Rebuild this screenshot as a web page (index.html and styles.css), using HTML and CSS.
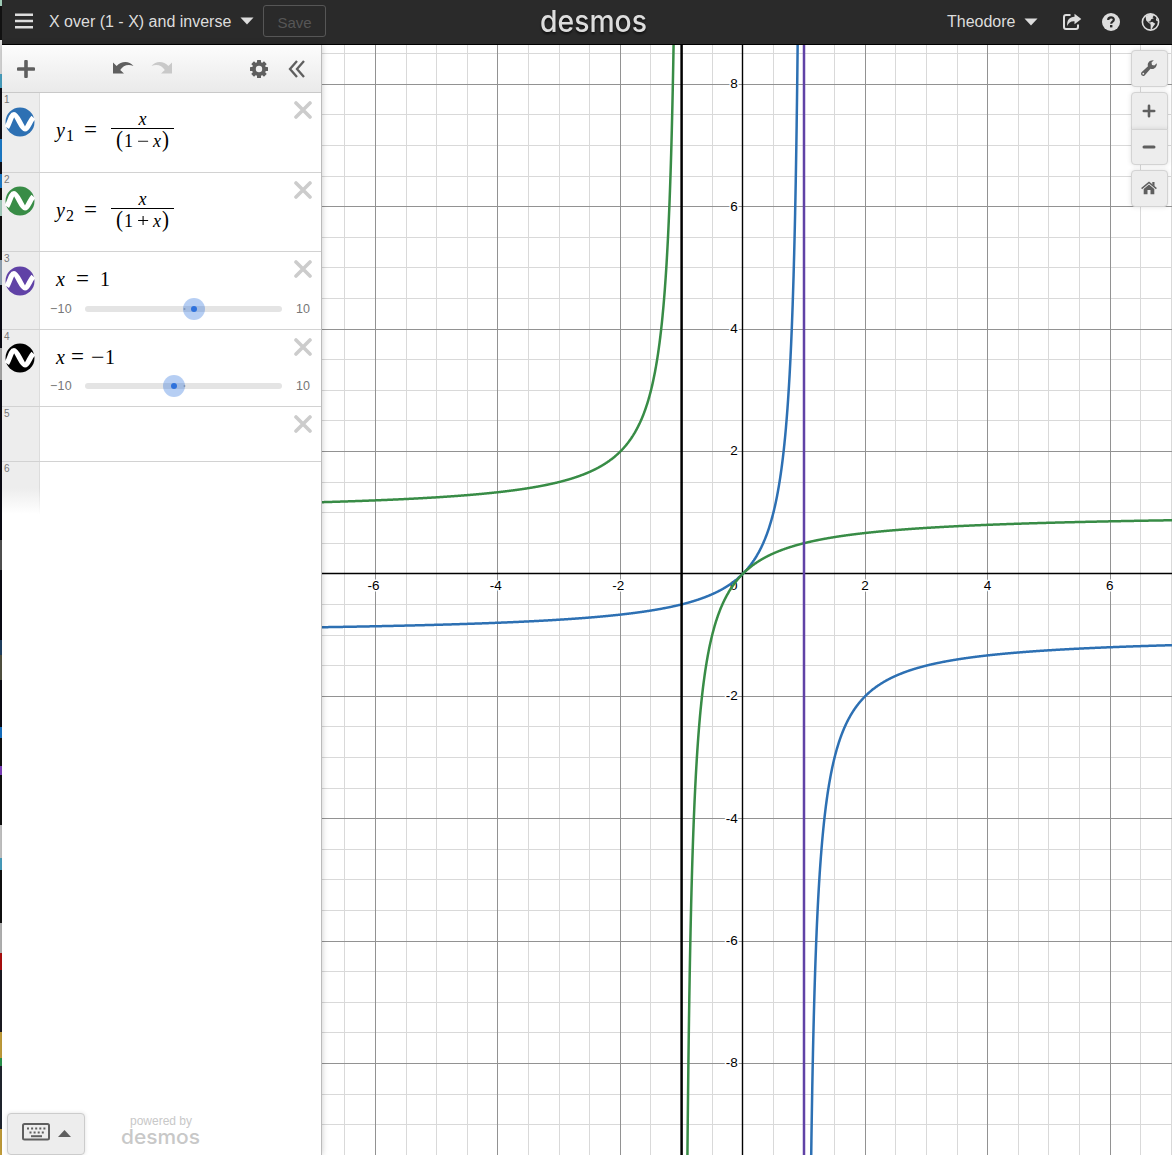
FILE: index.html
```
<!DOCTYPE html>
<html lang="en">
<head>
<meta charset="utf-8">
<title>Desmos | X over (1 - X) and inverse</title>
<link rel="stylesheet" href="styles.css">
</head>
<body>
<svg class="defs" aria-hidden="true">
  <symbol id="close" viewBox="0 0 18 18"><path d="M2 2L16 16M16 2L2 16" stroke="#ccc" stroke-width="3.6" stroke-linecap="round"/></symbol>
  <symbol id="wave" viewBox="0 0 30 30"><circle cx="15" cy="15" r="14.5" fill="currentColor"/><path d="M1.800 20.500C5 15.500 6 7.600 9 7.600C12.500 7.600 16.500 22 20 22C23 22 24.500 14.500 28.300 10.500" fill="none" stroke="#fff" stroke-width="5.200"/></symbol>
  <symbol id="undo" viewBox="0 0 22 14"><path d="M1 1.500V12.500H12L8.200 9C11 4.500 16 2.500 21.500 5C17 -.6 9 .2 4.600 5Z" fill="currentColor"/></symbol>
  <symbol id="caret" viewBox="0 0 14 8"><path d="M.5 .5H13.500L7 7.500Z" fill="currentColor"/></symbol>
</svg>
<div class="app">
  <div class="edge"></div>
  <header class="header">
    <div class="header-left">
      <svg class="burger" width="18" height="16"><path d="M0 1.800H18M0 8H18M0 14.200H18" stroke="#ddd" stroke-width="2.600"/></svg>
      <span class="title">X over (1 - X) and inverse</span>
      <svg class="caret" width="14" height="8"><use href="#caret"/></svg>
      <button class="save">Save</button>
    </div>
    <svg class="logo" width="116" height="40"><text x="3" y="31.500" textLength="107" lengthAdjust="spacingAndGlyphs">desmos</text></svg>
    <div class="header-right">
      <span class="user">Theodore</span>
      <svg class="caret" width="14" height="8"><use href="#caret"/></svg>
      <svg class="share" width="20" height="18" viewBox="0 0 20 18"><path d="M8.500 2H4Q2 2 2 4V14Q2 16 4 16H14Q16 16 16 14V11.500" fill="none" stroke="#ddd" stroke-width="2"/><path d="M12.500 .8L19.300 6L12.500 11.200V8.200C8.800 8 6.500 9.500 5.200 13C4.600 7.200 7.500 3.900 12.500 3.700Z" fill="#ddd"/></svg>
      <svg class="help" width="18" height="18" viewBox="0 0 18 18"><circle cx="9" cy="9" r="9" fill="#ddd"/><path d="M6.200 6.900C6.200 3.400 11.900 3.500 11.800 6.700C11.800 8.700 9.200 8.600 9.200 10.700" fill="none" stroke="#2a2a2a" stroke-width="2.200"/><rect x="8" y="12" width="2.400" height="2.400" fill="#2a2a2a"/></svg>
      <svg class="globe" width="19" height="18" viewBox="0 0 19 18"><circle cx="9.500" cy="9" r="8.100" fill="none" stroke="#ddd" stroke-width="1.600"/><path d="M4.500 3L9.800 .8L13 2.600L11.500 4.200L12.800 5.200L10.200 6.200L9.200 8.400L7.300 8.200L9.400 10.200L8.400 10.500L5.200 7.600ZM9 9.600L11.200 8.800L14.300 10.800L12 13.700L10.600 16.500L9.600 15.700L9.700 12.600ZM15 4.500L17.400 8.300L15 7.600Z" fill="#ddd"/></svg>
    </div>
  </header>

  <aside class="sidebar">
    <div class="toolbar">
      <svg class="add" width="18" height="18"><path d="M9 1.500V16.500M1.500 9H16.500" stroke="#5f5f5f" stroke-width="3.600" stroke-linecap="round"/></svg>
      <svg class="undo" width="22" height="14"><use href="#undo"/></svg>
      <svg class="redo" width="22" height="14"><use href="#undo"/></svg>
      <svg class="gear" width="20" height="20" viewBox="-10 -10 20 20"><g fill="#5f5f5f"><rect x="-2" y="-9" width="4" height="18" rx=".5"/><rect x="-2" y="-9" width="4" height="18" rx=".5" transform="rotate(45)"/><rect x="-2" y="-9" width="4" height="18" rx=".5" transform="rotate(90)"/><rect x="-2" y="-9" width="4" height="18" rx=".5" transform="rotate(135)"/><circle r="7"/></g><circle r="3.200" fill="#f2f2f2"/></svg>
      <svg class="collapse" width="18" height="20"><path d="M9 2L2 10L9 18M16 2L9 10L16 18" fill="none" stroke="#5f5f5f" stroke-width="2.300"/></svg>
    </div>

    <div class="row row1">
      <div class="gutter"><span>1</span><svg class="blue" width="30" height="30"><use href="#wave"/></svg></div>
      <div class="body">
        <div class="math eq"><i class="y">y</i><sub>1</sub><span class="rel">=</span><span class="frac"><i>x</i><span class="den"><b>(</b>1<span class="op">−</span><i>x</i><b>)</b></span></span></div>
      </div>
      <svg class="close" width="18" height="18"><use href="#close"/></svg>
    </div>
    <div class="row row2">
      <div class="gutter"><span>2</span><svg class="green" width="30" height="30"><use href="#wave"/></svg></div>
      <div class="body">
        <div class="math eq"><i class="y">y</i><sub>2</sub><span class="rel">=</span><span class="frac"><i>x</i><span class="den"><b>(</b>1<span class="op">+</span><i>x</i><b>)</b></span></span></div>
      </div>
      <svg class="close" width="18" height="18"><use href="#close"/></svg>
    </div>
    <div class="row row3">
      <div class="gutter"><span>3</span><svg class="purple" width="30" height="30"><use href="#wave"/></svg></div>
      <div class="body">
        <div class="math line wide"><i>x</i><span class="rel">=</span><span>1</span></div>
        <div class="slider"><span class="min">−10</span><svg width="198" height="24"><rect x="0" y="9" width="197" height="6" rx="3" fill="#e4e4e4"/><circle cx="99.500" cy="12" r="1" fill="#aaa"/><circle cx="109" cy="12" r="11" fill="#2f72dc" fill-opacity=".35"/><circle cx="109" cy="12" r="3" fill="#2f72dc"/></svg><span class="max">10</span></div>
      </div>
      <svg class="close" width="18" height="18"><use href="#close"/></svg>
    </div>
    <div class="row row4">
      <div class="gutter"><span>4</span><svg class="black" width="30" height="30"><use href="#wave"/></svg></div>
      <div class="body">
        <div class="math line"><i>x</i><span class="rel">=</span><span class="neg">−</span><span>1</span></div>
        <div class="slider"><span class="min">−10</span><svg width="198" height="24"><rect x="0" y="9" width="197" height="6" rx="3" fill="#e4e4e4"/><circle cx="99.500" cy="12" r="1" fill="#aaa"/><circle cx="89" cy="12" r="11" fill="#2f72dc" fill-opacity=".35"/><circle cx="89" cy="12" r="3" fill="#2f72dc"/></svg><span class="max">10</span></div>
      </div>
      <svg class="close" width="18" height="18"><use href="#close"/></svg>
    </div>
    <div class="row row5">
      <div class="gutter"><span>5</span></div>
      <div class="body"></div>
      <svg class="close" width="18" height="18"><use href="#close"/></svg>
    </div>
    <div class="row row6">
      <div class="gutter"><span>6</span></div>
    </div>

    <div class="footer">
      <button class="keypad">
        <svg width="28" height="18"><rect x="1" y="1" width="26" height="15.500" rx="1.500" fill="none" stroke="#5f5f5f" stroke-width="2"/><path d="M5 5.500H24M7.500 9.500H22" stroke="#5f5f5f" stroke-width="2" stroke-dasharray="2 2.100"/><path d="M9 13.200H20" stroke="#5f5f5f" stroke-width="2"/></svg>
        <svg class="up" width="13" height="7"><path d="M0 7L6.500 0L13 7Z" fill="#5f5f5f"/></svg>
      </button>
      <div class="powered">
        <span>powered by</span>
        <svg width="82" height="27"><text x="1" y="16" textLength="79" lengthAdjust="spacingAndGlyphs">desmos</text></svg>
      </div>
    </div>
  </aside>

  <main class="graph">
    <svg id="plot" width="850" height="1110" viewBox="322 45 850 1110"></svg>
    <div class="controls">
      <button><svg width="18" height="18" viewBox="0 0 18 18"><path d="M1.500 13.200L8 7.300C7 4 9.500 .8 13.800 1.200L11.500 3.500L12 5.900L14.300 6.400L16.800 4.200C17.200 8.200 13.800 10.800 10.500 9.800L4.600 16.400C2.500 18 .1 15.400 1.500 13.200Z" fill="#5f5f5f"/><circle cx="3.300" cy="14.700" r=".9" fill="#ededed"/></svg></button>
      <div class="zoom">
        <button><svg width="14" height="14"><path d="M7 1.800V12.200M1.800 7H12.200" stroke="#5f5f5f" stroke-width="2.600" stroke-linecap="round"/></svg></button>
        <button><svg width="14" height="14"><path d="M2 7H12" stroke="#5f5f5f" stroke-width="3" stroke-linecap="round"/></svg></button>
      </div>
      <button><svg width="16" height="14" viewBox="0 0 16 14"><path d="M.6 7.600L8 1.400L15.400 7.600" fill="none" stroke="#5f5f5f" stroke-width="1.500"/><path d="M11.300 1H13.500V5.500L11.300 3.500ZM2.700 8L8 3.600L13.300 8V13.200H9.500V9H6.500V13.200H2.700Z" fill="#5f5f5f"/></svg></button>
    </div>
  </main>
</div>
<script src="plot.js"></script>
</body>
</html>
```
FILE: styles.css
```
* { box-sizing: border-box; }
body { margin: 0; font-family: "Liberation Sans", Arial, sans-serif; background: #fff; }
button { font: inherit; padding: 0; margin: 0; }
svg { display: block; flex: none; }
.defs { display: none; }

.app {
  display: grid;
  grid-template: 45px 1110px / 2px 320px 850px;
  width: 1172px;
  height: 1155px;
  overflow: hidden;
}
.edge {
  grid-row: 1 / 3;
  background: linear-gradient(#9dcab5 0 6px, #111 6px 40px, #ddd 40px 74px, #4aa5c6 74px 88px, #101018 88px 139px, #1d7fd0 139px 162px, #101018 162px 174px, #1d7fd0 174px 188px, #111 188px 200px, #a9d4c4 200px 216px, #111 216px 260px, #9ab 260px 285px, #0b0b14 285px 348px, #aaa 348px 380px, #0b0b14 380px 540px, #555 540px 570px, #0b0b14 570px 640px, #246 640px 655px, #554 655px 680px, #0b0b14 680px 727px, #1675ca 727px 738px, #111 738px 766px, #8240c4 766px 775px, #111 775px 825px, #ccc 825px 858px, #4aa5c6 858px 870px, #111 870px 923px, #bbb 923px 953px, #b30f0f 953px 970px, #1c1c24 970px 1032px, #cba43c 1032px 1058px, #2c9a50 1058px 1066px, #222731 1066px 1129px, #cba43c 1129px);
}

.header {
  grid-column: 2 / 4;
  display: grid;
  grid-template-columns: 530px 116px 1fr;
  background: #2a2a2a;
  border-bottom: 1px solid #000;
  color: #ddd;
  font-size: 16px;
}
.header-left { display: flex; align-items: center; height: 42px; padding-left: 13px; }
.title { width: 183px; margin: 1px 0 0 16px; white-space: nowrap; }
.header-left .caret { margin-left: 8px; }
.save {
  width: 63px; height: 32px; margin-left: 9px; padding-top: 2px;
  border: 1px solid #565656; border-radius: 3px;
  background: transparent; color: #565656; font-size: 15px;
}
.logo { margin-left: 5px; }
.logo text { font: 500 30px Inter, sans-serif; fill: #ddd; filter: drop-shadow(0 2px 1px #111); }
.header-right { display: flex; align-items: center; justify-content: flex-end; height: 43px; padding-right: 12px; }
.user { width: 70px; margin-top: 1px; white-space: nowrap; }
.header-right .caret { margin-left: 7px; }
.share { margin-left: 24px; }
.help { margin-left: 20px; }
.globe { margin-left: 21px; }

.sidebar {
  display: flex;
  flex-direction: column;
  border-right: 1px solid #bbb;
  box-shadow: 0 0 6px rgba(0, 0, 0, .22);
  background: #fff;
  z-index: 1;
}
.toolbar {
  display: flex; align-items: center;
  height: 48px; padding-left: 15px;
  background: linear-gradient(#fcfcfc, #eaeaea);
  border-bottom: 1px solid #c9c9c9;
}
.undo { margin: -2px 0 0 77px; color: #5f5f5f; }
.redo { margin: -2px 0 0 17px; color: #c9c9c9; transform: scaleX(-1); }
.gear { margin-left: 76px; }
.collapse { margin-left: 19px; }

.row { display: flex; border-bottom: 1px solid #d2d2d2; }
.row1 { height: 80px; }
.row2 { height: 79px; }
.row3 { height: 78px; }
.row4 { height: 77px; }
.row5 { height: 55px; }
.row6 { height: 52px; border: 0; }
.gutter {
  width: 38px; padding: 1px 0 0 2px;
  background: #ededed; border-right: 1px solid #ddd;
  color: #777; font-size: 10px; line-height: 11px;
}
.gutter span { display: block; }
.gutter svg { margin: 1.5px 0 0 1px; }
.row2 .gutter svg, .row4 .gutter svg { margin-top: .5px; }
.row6 .gutter { background: linear-gradient(#ededed 50%, #fff); border-image: linear-gradient(#ddd 50%, #fff) 1; }
.blue { color: #2d70b3; }
.green { color: #388c46; }
.purple { color: #6042a6; }
.black { color: #000; }
.body { width: 246px; flex: none; }
.close { margin: 8px 0 0 8px; }

.math { display: flex; padding-left: 16px; font-family: "Liberation Serif", "Times New Roman", serif; font-size: 20px; line-height: 24px; color: #000; }
.math .rel { width: 13px; font-size: 23px; text-align: center; }
.eq { padding-top: 16px; }
.y { width: 10px; margin-top: 9px; }
.eq sub { width: 8px; margin-top: 15px; font-size: 16px; line-height: 24px; text-align: center; vertical-align: baseline; }
.eq .rel { margin: 9px 14px 0 10px; }
.frac { display: flex; flex-direction: column; align-items: center; width: 63px; font-size: 18px; line-height: 19px; }
.frac > i { height: 19px; padding-top: 1px; }
.den { display: flex; justify-content: center; width: 63px; border-top: 1.5px solid #000; padding-top: 3px; }
.den b { font-weight: 400; font-size: 21px; transform: translateY(-1px) scaleY(1.05); }
.den b:first-child { margin-right: 1px; }
.den b:last-child { margin-left: 1px; }
.den .op { margin: 0 5px; transform: scaleX(1.2); }
.line { height: 45px; padding-top: 15px; }
.line .rel { margin-left: 6px; margin-right: 7px; }
.wide .rel { margin: 0 11px 0 11px; }
.line .neg { width: 14px; font-size: 24px; }
.row4 .line { height: 44px; }
.slider { display: flex; align-items: center; height: 24px; color: #777; font-size: 12.5px; }
.min { flex: none; width: 45px; padding-left: 10px; letter-spacing: .2px; }
.max { margin-left: 13px; flex: none; }

.footer { display: flex; align-items: flex-start; margin-top: auto; height: 42px; padding-left: 5px; }
.keypad {
  display: flex; align-items: center;
  width: 78px; height: 42px; padding: 0 0 4px 14px;
  background: #ededed; border: 1px solid #ccc; border-radius: 4px;
  box-shadow: 0 0 4px rgba(0, 0, 0, .12);
}
.up { margin: 3px 0 0 8px; }
.powered { width: 82px; margin-left: 35px; padding-top: 1px; color: #c8c8c8; font-size: 12px; line-height: 14px; text-align: center; }
.powered span { display: block; }
.powered text { font: 500 20px Inter, sans-serif; fill: #c8c8c8; }

.graph { display: grid; }
.graph > * { grid-area: 1 / 1; }
.controls { display: flex; flex-direction: column; gap: 5px; width: 37px; justify-self: end; margin: 5px 4px 0 0; z-index: 1; }
.controls button {
  display: flex; align-items: center; justify-content: center;
  width: 37px; height: 37px; padding-right: 1px;
  background: #ededed; border: 1px solid #d3d3d3; border-radius: 4px;
  box-shadow: 0 0 5px rgba(0, 0, 0, .12);
}
.zoom button:first-child { height: 38px; border-radius: 4px 4px 0 0; }
.zoom button:last-child { margin-top: -1px; height: 36px; border-radius: 0 0 4px 4px; }
.controls > button:last-child { padding-bottom: 1px; }
.controls > button:first-child { padding-bottom: 2px; }
.minor { stroke: #d9d9d9; }
.major { stroke: #929292; }
.axis { stroke: #000; stroke-width: 1.4; }
.label { font-size: 13.5px; fill: #000; stroke: #fff; stroke-width: 3px; stroke-linejoin: round; paint-order: stroke; }
.curve { fill: none; stroke-width: 2.5; stroke-linejoin: round; }
```
FILE: plot.js
```
const plot = document.getElementById("plot");
const ox = 742.4, oy = 573.4, unit = 61.2;

function add(name, attrs, text) {
  const el = document.createElementNS("http://www.w3.org/2000/svg", name);
  for (const key in attrs) el.setAttribute(key, attrs[key]);
  if (text !== undefined) el.textContent = text;
  plot.appendChild(el);
}
const vertical = (k, cls) => { const x = Math.floor(ox + k * unit + 0.4) + 0.5; add("path", { d: `M${x} 45V1155`, class: cls }); };
const horizontal = (k, cls) => { const y = Math.round(oy - k * unit) + 0.5; add("path", { d: `M322 ${y}H1172`, class: cls }); };

// Grid: half-unit lines first, then every second unit, then the axes.
for (const cls of ["minor", "major"]) {
  for (let n = -20; n <= 20; n++) {
    if ((n % 4 === 0) !== (cls === "major")) continue;
    vertical(n / 2, cls);
    horizontal(n / 2, cls);
  }
}
vertical(0, "axis");
horizontal(0, "axis");

for (let n = -8; n <= 8; n += 2) {
  if (n === 0) continue;
  if (Math.abs(n) < 8) add("text", { x: ox + n * unit - (n < 0 ? 2 : 0) + 0.2, y: 590, "text-anchor": "middle", class: "label" }, n);
  add("text", { x: 737.7, y: oy - n * unit + 4.3, "text-anchor": "end", class: "label" }, n);
}
add("text", { x: 737.5, y: 590, "text-anchor": "end", class: "label" }, 0);

function curve(f, from, to, color) {
  let d = "";
  for (let x = from; x <= to; x += 0.005) {
    const y = f(x);
    if (Math.abs(y) > 11) continue;
    d += (d ? "L" : "M") + (ox + 0.4 + x * unit).toFixed(2) + " " + (oy + 0.4 - y * unit).toFixed(2);
  }
  add("path", { d, class: "curve", stroke: color });
}
const first = x => x / (1 - x), second = x => x / (1 + x);
curve(first, -7, 0.999, "#2d70b3");
curve(first, 1.001, 7.1, "#2d70b3");
curve(second, -7, -1.001, "#388c46");
curve(second, -0.999, 7.1, "#388c46");
add("path", { d: `M${ox + 0.4 + unit} 45V1155`, class: "curve", stroke: "#6042a6" });
add("path", { d: `M${ox + 0.4 - unit} 45V1155`, class: "curve", stroke: "#000" });
```
